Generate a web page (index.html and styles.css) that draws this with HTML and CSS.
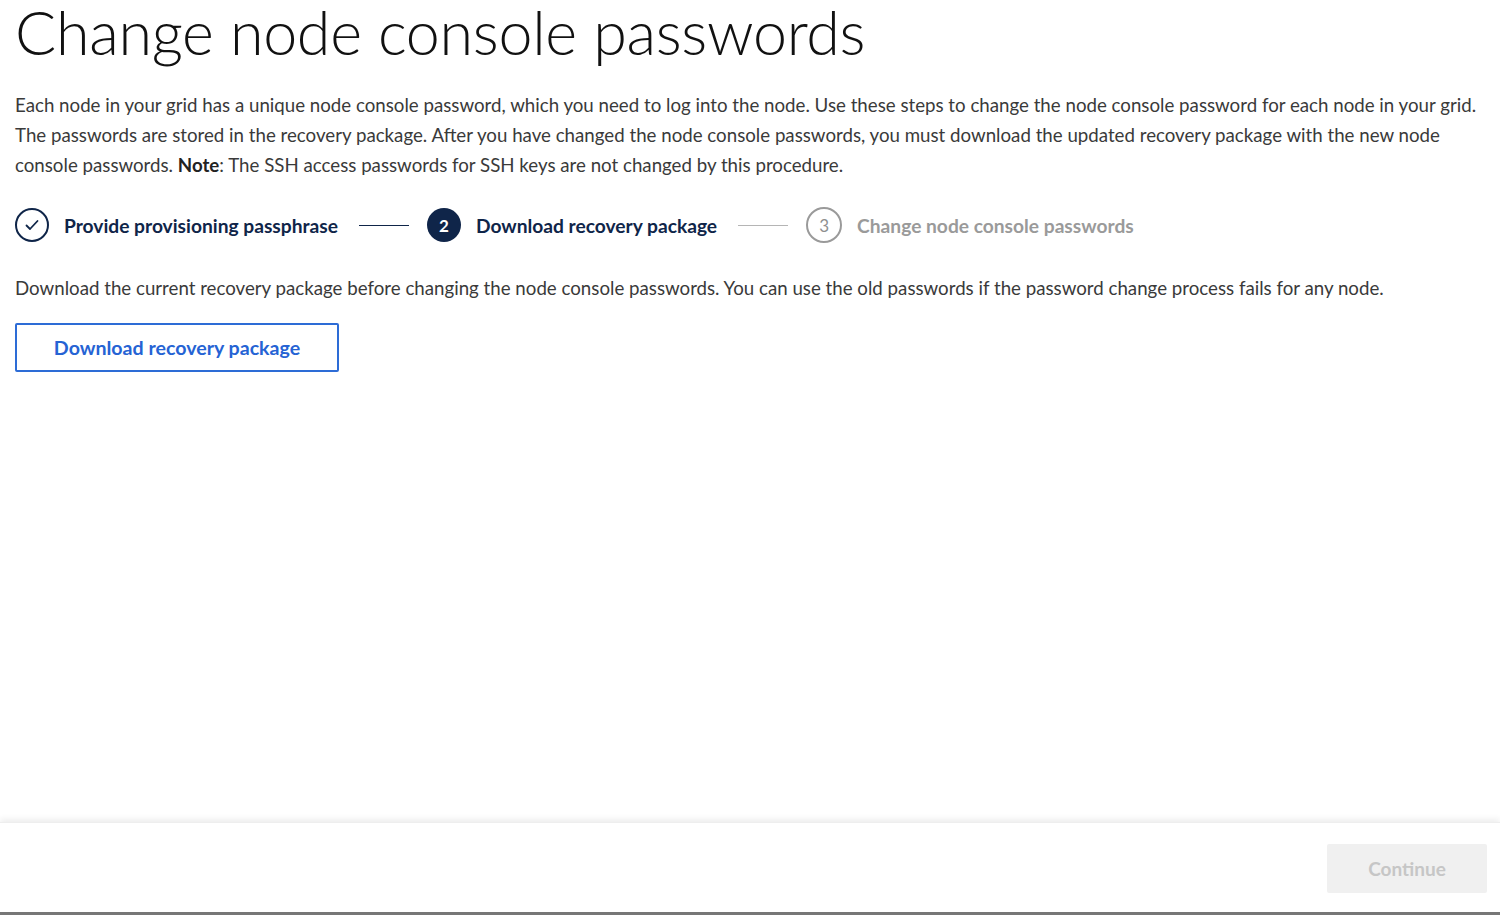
FILE: index.html
```html
<!DOCTYPE html>
<html>
<head>
<meta charset="utf-8">
<link rel="stylesheet" href="styles.css">
</head>
<body>
<div class="page">
  <main class="content">
    <h1 class="title">Change node console passwords</h1>
    <p class="intro">Each node in your grid has a unique node console password, which you need to log into the node. Use these steps to change the node console password for each node in your grid. The passwords are stored in the recovery package. After you have changed the node console passwords, you must download the updated recovery package with the new node console passwords. <strong>Note</strong>: The SSH access passwords for SSH keys are not changed by this procedure.</p>
    <ol class="steps">
      <li class="step done">
        <span class="circle"><svg width="16" height="16" viewBox="0 0 16 16"><path d="M2.5 8.5 L6 12 L13.5 4" fill="none" stroke="#0f2549" stroke-width="1.8" stroke-linecap="round" stroke-linejoin="round"/></svg></span>
        <span class="label">Provide provisioning passphrase</span>
      </li>
      <li class="connector dark"></li>
      <li class="step active">
        <span class="circle">2</span>
        <span class="label">Download recovery package</span>
      </li>
      <li class="connector"></li>
      <li class="step todo">
        <span class="circle">3</span>
        <span class="label">Change node console passwords</span>
      </li>
    </ol>
    <p class="desc">Download the current recovery package before changing the node console passwords. You can use the old passwords if the password change process fails for any node.</p>
    <button class="btn-outline">Download recovery package</button>
  </main>
  <footer class="footer">
    <button class="btn-disabled">Continue</button>
  </footer>
</div>
</body>
</html>
```

FILE: styles.css
```css
html, body {
  margin: 0;
  padding: 0;
  background: #fff;
}
body {
  font-family: "Lato", "Source Sans Pro", "Open Sans", sans-serif;
  color: #333;
}
.page {
  height: 915px;
  display: flex;
  flex-direction: column;
  border-bottom: 3px solid #777;
  box-sizing: border-box;
}
.content {
  flex: 1;
  padding: 0 15px;
}
.title {
  margin: 0;
  font-weight: 300;
  font-size: 61px;
  line-height: 70px;
  margin-top: -3px;
  color: #111;
  letter-spacing: -0.3px;
}
.intro {
  margin: 23px 0 0;
  font-size: 18.7px;
  line-height: 30px;
  color: #3a3a3a;
}
.intro strong {
  font-weight: 700;
  color: #222;
}
.steps {
  list-style: none;
  margin: 27px 0 0;
  padding: 0;
  display: flex;
  align-items: center;
}
.step {
  display: flex;
  align-items: center;
  gap: 15px;
}
.circle {
  width: 34px;
  height: 34px;
  border-radius: 50%;
  box-sizing: border-box;
  display: flex;
  align-items: center;
  justify-content: center;
  font-size: 17px;
  font-weight: 700;
}
.label {
  font-size: 19.2px;
  font-weight: 700;
}
.step.done .circle {
  border: 2px solid #0f2549;
}
.step.done .label,
.step.active .label {
  color: #0f2549;
}
.step.active .circle {
  background: #0f2549;
  color: #fff;
}
.step.todo .circle {
  width: 36px;
  height: 36px;
  border: 2px solid #9a9a9a;
  color: #8f8f8f;
  font-weight: 400;
}
.step.todo .label {
  color: #9a9a9a;
}
.connector {
  width: 50px;
  height: 1px;
  background: #b5b5b5;
  margin: 0 18px 0 21px;
}
.connector.dark {
  background: #0f2549;
}
.desc {
  margin: 32px 0 0;
  font-size: 18.7px;
  line-height: 26px;
  color: #3a3a3a;
}
.btn-outline {
  margin-top: 22px;
  width: 324px;
  height: 49px;
  border: 2px solid #2d6cd6;
  border-radius: 2px;
  background: #fff;
  color: #2563d4;
  font-family: inherit;
  font-size: 19.6px;
  font-weight: 700;
  cursor: pointer;
}
.footer {
  height: 90px;
  display: flex;
  justify-content: flex-end;
  align-items: flex-start;
  padding: 21px 13px 0 0;
  box-shadow: 0 -3px 6px rgba(0,0,0,0.07);
  border-top: 1px solid #eee;
  box-sizing: border-box;
}
.btn-disabled {
  width: 160px;
  height: 49px;
  border: none;
  border-radius: 2px;
  background: #f0f0f0;
  color: #c6c6c6;
  font-family: inherit;
  font-size: 19px;
  font-weight: 700;
}
```
